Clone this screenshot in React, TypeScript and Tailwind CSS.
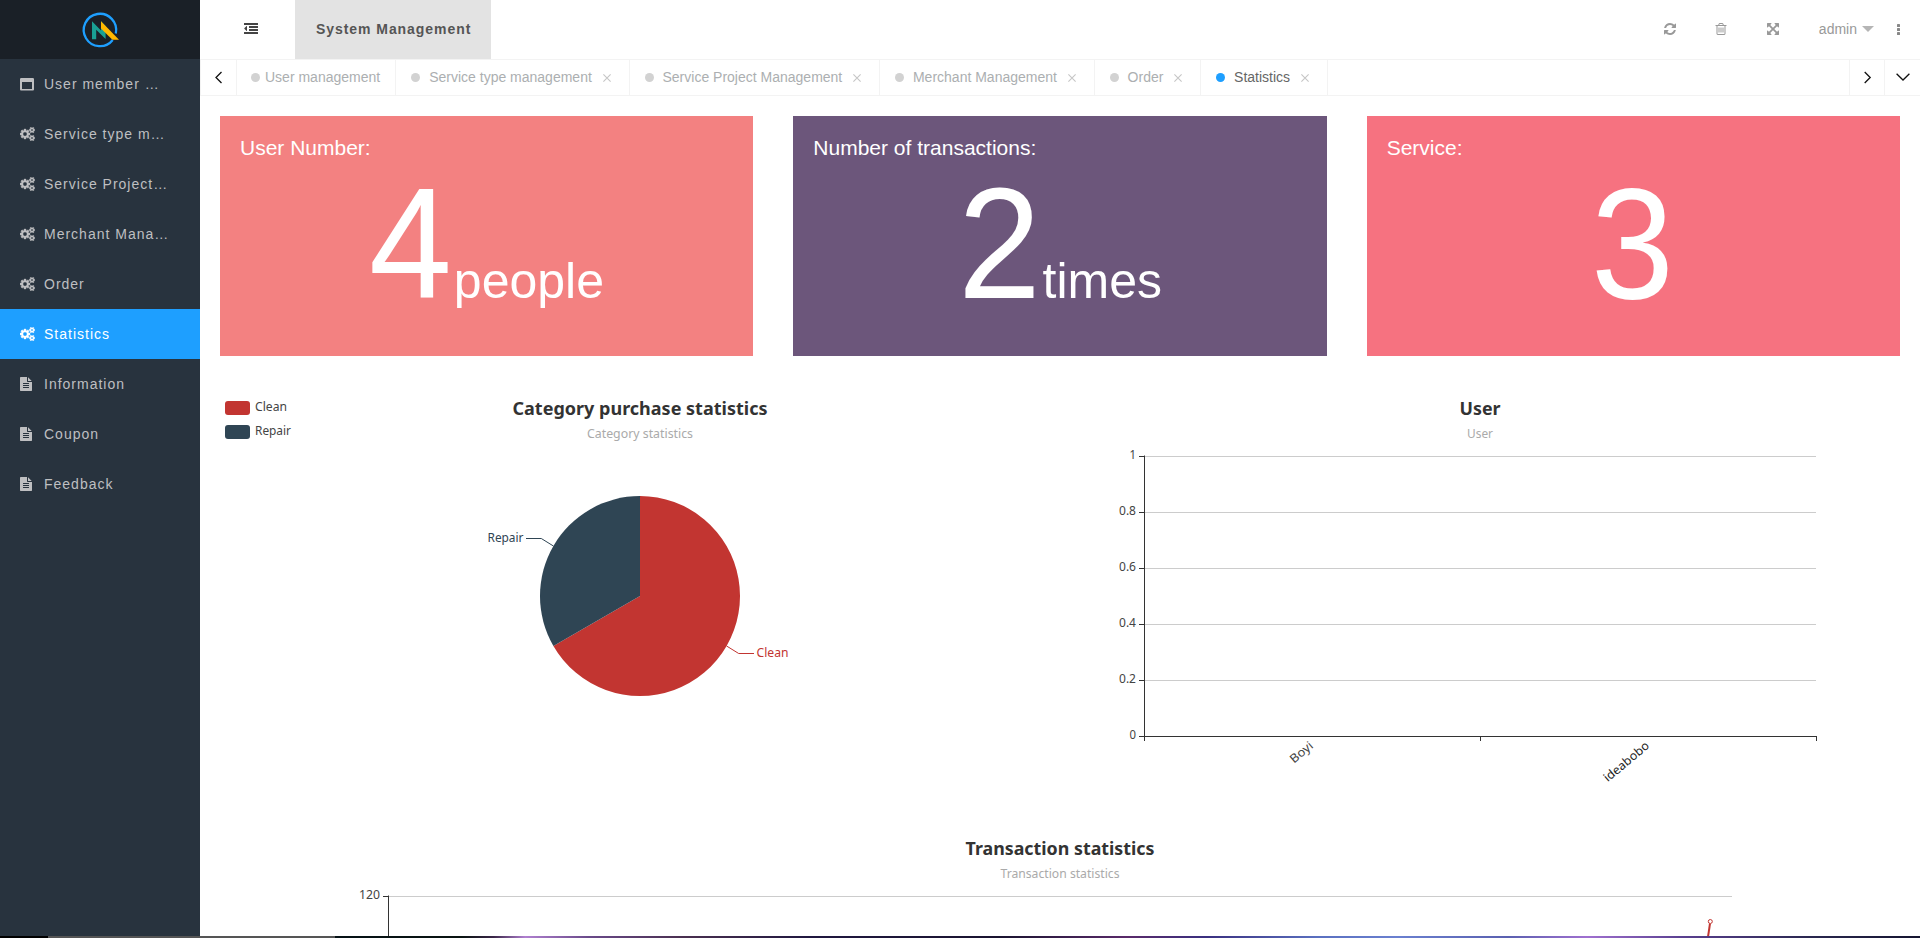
import React from "react";

const COGS =
  "M896 896q0-106-75-181t-181-75-181 75-75 181 75 181 181 75 181-75 75-181zm768 512q0-52-38-90t-90-38-90 38-38 90q0 53 37.5 90.5t90.5 37.5 90.5-37.5 37.5-90.5zm0-1024q0-52-38-90t-90-38-90 38-38 90q0 53 37.5 90.5t90.5 37.5 90.5-37.5 37.5-90.5zm-384 421v185q0 10-7 19.5t-16 10.5l-155 24q-11 35-32 76 34 48 90 115 7 11 7 20 0 12-7 19-23 30-82.5 89.5t-78.5 59.5q-11 0-21-7l-115-90q-37 19-77 31-11 108-23 155-7 24-30 24h-186q-11 0-20-7.5t-10-17.5l-23-153q-34-10-75-31l-118 89q-7 7-20 7-11 0-21-8-144-133-144-160 0-9 7-19 10-14 41-53t47-61q-23-44-35-82l-152-24q-10-1-17-9.5t-7-19.5v-185q0-10 7-19.5t16-10.5l155-24q11-35 32-76-34-48-90-115-7-11-7-20 0-12 7-20 22-30 82-89t79-59q11 0 21 7l115 90q34-18 77-32 11-108 23-154 7-24 30-24h186q11 0 20 7.5t10 17.5l23 153q34 10 75 31l118-89q8-7 20-7 11 0 21 8 144 133 144 160 0 8-7 19-12 16-42 54t-45 60q23 48 34 82l152 23q10 2 17 10.5t7 19.5zm640 533v140q0 16-149 31-12 27-30 52 51 113 51 138 0 4-4 7-122 71-124 71-8 0-46-47t-52-68q-20 2-30 2t-30-2q-14 21-52 68t-46 47q-2 0-124-71-4-3-4-7 0-25 51-138-18-25-30-52-149-15-149-31v-140q0-16 149-31 13-29 30-52-51-113-51-138 0-4 4-7 4-2 35-20t59-34 30-16q8 0 46 46.5t52 67.5q20-2 30-2t30 2q51-71 92-112l6-2q4 0 124 70 4 3 4 7 0 25-51 138 17 23 30 52 149 15 149 31zm0-1024v140q0 16-149 31-12 27-30 52 51 113 51 138 0 4-4 7-122 71-124 71-8 0-46-47t-52-68q-20 2-30 2t-30-2q-14 21-52 68t-46 47q-2 0-124-71-4-3-4-7 0-25 51-138-18-25-30-52-149-15-149-31v-140q0-16 149-31 13-29 30-52-51-113-51-138 0-4 4-7 4-2 35-20t59-34 30-16q8 0 46 46.5t52 67.5q20-2 30-2t30 2q51-71 92-112l6-2q4 0 124 70 4 3 4 7 0 25-51 138 17 23 30 52 149 15 149 31z";
const FILE =
  "M1596 476q14 14 28 36h-472v-472q22 14 36 28zm-476 164h544v1056q0 40-28 68t-68 28h-1344q-40 0-68-28t-28-68v-1600q0-40 28-68t68-28h800v544q0 40 28 68t68 28zm160 736v-64q0-14-9-23t-23-9h-704q-14 0-23 9t-9 23v64q0 14 9 23t23 9h704q14 0 23-9t9-23zm0-256v-64q0-14-9-23t-23-9h-704q-14 0-23 9t-9 23v64q0 14 9 23t23 9h704q14 0 23-9t9-23zm0-256v-64q0-14-9-23t-23-9h-704q-14 0-23 9t-9 23v64q0 14 9 23t23 9h704q14 0 23-9t9-23z";
const WINDOW =
  "M256 1536h1280v-896h-1280zM160 128h1472q66 0 113 47t47 113v1280q0 66-47 113t-113 47h-1472q-66 0-113-47t-47-113v-1280q0-66 47-113t113-47z";
const REFRESH =
  "M1639 1056q0 5-1 7-64 268-268 434.5t-478 166.5q-146 0-282.5-55t-243.5-157l-129 129q-19 19-45 19t-45-19-19-45v-448q0-26 19-45t45-19h448q26 0 45 19t19 45-19 45l-137 137q71 66 161 102t187 36q134 0 250-65t186-179q11-17 53-117 8-23 30-23h192q13 0 22.5 9.5t9.5 22.5zm25-800v448q0 26-19 45t-45 19h-448q-26 0-45-19t-19-45 19-45l138-138q-148-137-349-137-134 0-250 65t-186 179q-11 17-53 117-8 23-30 23h-199q-13 0-22.5-9.5t-9.5-22.5v-7q65-268 270-434.5t480-166.5q146 0 284 55.5t245 156.5l130-129q19-19 45-19t45 19 19 45z";
const TRASH =
  "M704 736v576q0 14-9 23t-23 9h-64q-14 0-23-9t-9-23v-576q0-14 9-23t23-9h64q14 0 23 9t9 23zm256 0v576q0 14-9 23t-23 9h-64q-14 0-23-9t-9-23v-576q0-14 9-23t23-9h64q14 0 23 9t9 23zm256 0v576q0 14-9 23t-23 9h-64q-14 0-23-9t-9-23v-576q0-14 9-23t23-9h64q14 0 23 9t9 23zm128 724v-948h-896v948q0 22 7 40.5t14.5 27 10.5 8.5h832q3 0 10.5-8.5t14.5-27 7-40.5zm-672-1076h448l-48-117q-7-9-17-11h-317q-10 2-17 11zm928 32v64q0 14-9 23t-23 9h-96v948q0 83-47 143.5t-113 60.5h-832q-66 0-113-58.5t-47-141.5v-952h-96q-14 0-23-9t-9-23v-64q0-14 9-23t23-9h309l70-167q15-37 54-63t79-26h320q40 0 79 26t54 63l70 167h309q14 0 23 9t9 23z";
const EXPAND =
  "M1411 541l-355 355 355 355 144-144q29-31 70-14 39 17 39 59v448q0 26-19 45t-45 19h-448q-42 0-59-40-17-39 14-69l144-144-355-355-355 355 144 144q31 30 14 69-17 40-59 40h-448q-26 0-45-19t-19-45v-448q0-42 40-59 39-17 69 14l144 144 355-355-355-355-144 144q-19 19-45 19-12 0-24-5-40-17-40-59v-448q0-26 19-45t45-19h448q42 0 59 40 17 39-14 69l-144 144 355 355 355-355-144-144q-31-30-14-69 17-40 59-40h448q26 0 45 19t19 45v448q0 42-39 59-13 5-25 5-26 0-45-19z";
const OUTDENT =
  "M384 544v576q0 13-9.5 22.5t-22.5 9.5q-14 0-23-9l-288-288q-9-9-9-23t9-23l288-288q9-9 23-9 13 0 22.5 9.5t9.5 22.5zM32 1280h1728q32 0 32 32v192q0 32-32 32h-1728q-32 0-32-32v-192q0-32 32-32zM672 896h1088q32 0 32 32v192q0 32-32 32h-1088q-32 0-32-32v-192q0-32 32-32zM672 512h1088q32 0 32 32v192q0 32-32 32h-1088q-32 0-32-32v-192q0-32 32-32zM32 128h1728q32 0 32 32v192q0 32-32 32h-1728q-32 0-32-32v-192q0-32 32-32z";

function Glyph({ d, box = "0 0 1792 1792", className = "h-3.5 w-3.5" }: { d: string; box?: string; className?: string }) {
  return (
    <svg viewBox={box} className={className} fill="currentColor" fillRule={d === WINDOW ? "evenodd" : "nonzero"}>
      <path d={d} />
    </svg>
  );
}

type Kind = "window" | "cogs" | "file";

const MENU: { label: string; kind: Kind; active?: boolean }[] = [
  { label: "User member …", kind: "window" },
  { label: "Service type m…", kind: "cogs" },
  { label: "Service Project…", kind: "cogs" },
  { label: "Merchant Mana…", kind: "cogs" },
  { label: "Order", kind: "cogs" },
  { label: "Statistics", kind: "cogs", active: true },
  { label: "Information", kind: "file" },
  { label: "Coupon", kind: "file" },
  { label: "Feedback", kind: "file" },
];

function MenuIcon({ kind }: { kind: Kind }) {
  if (kind === "window") return <Glyph d={WINDOW} />;
  if (kind === "cogs") return <Glyph d={COGS} box="0 0 1920 1792" className="h-3.5 w-[15px] stroke-current stroke-[50]" />;
  return <Glyph d={FILE} box="128 0 1536 1792" className="h-3.5 w-3" />;
}

function Sidebar() {
  return (
    <aside className="flex w-[200px] shrink-0 flex-col bg-[#28333e]">
      <div className="flex h-[59px] justify-center bg-[#1a2027]">
        <svg viewBox="80 10 40 40" className="mt-2.5 h-10 w-10">
          <path d="M112.7 40A16.2 16.2 0 1 1 115.8 33.4" fill="none" stroke="#1e9fff" strokeWidth="2.3" />
          <path d="M92 21.2L101 30.6V21.2L105.6 26V39L96.2 29.8V39.2H92z" fill="#1aa094" />
          <path d="M101 21.2L119 39.8H112.4L101 28.4z" fill="#ffb800" />
        </svg>
      </div>
      <nav className="flex flex-col">
        {MENU.map((m) => (
          <div
            key={m.label}
            className={
              m.active
                ? "flex h-[50px] items-center bg-[#1e9fff] pl-5 text-sm tracking-[1px] text-white"
                : "flex h-[50px] items-center pl-5 text-sm tracking-[1px] text-[#bebfc1]"
            }
          >
            <span className="w-6 shrink-0">
              <MenuIcon kind={m.kind} />
            </span>
            <span className="whitespace-nowrap">{m.label}</span>
          </div>
        ))}
      </nav>
    </aside>
  );
}

function Header() {
  return (
    <header className="flex h-[59px] shrink-0 items-center text-[#999]">
      <span className="ml-11 w-[51px] pb-px text-[#444]">
        <Glyph d={OUTDENT} />
      </span>
      <div className="flex h-full w-[196px] items-center bg-[#e3e3e3] pb-px pl-[21px] text-sm font-bold tracking-[0.94px] whitespace-nowrap text-[#555]">
        System Management
      </div>
      <div className="ml-auto flex items-center pb-px">
        <Glyph d={REFRESH} />
        <Glyph d={TRASH} className="ml-[37px] h-3.5 w-3.5" />
        <Glyph d={EXPAND} className="ml-[38px] h-3.5 w-3.5" />
        <span className="ml-[39px] text-sm">admin</span>
        <svg viewBox="0 0 12 6" className="ml-[5px] h-1.5 w-3" fill="#b5b5b5">
          <path d="M0 0h12L6 6z" />
        </svg>
        <svg viewBox="0 0 3 11" className="mr-5 ml-[23px] h-[11px] w-[3px]" fill="#888">
          <rect width="3" height="3" rx=".6" />
          <rect y="4" width="3" height="3" rx=".6" />
          <rect y="8" width="3" height="3" rx=".6" />
        </svg>
      </div>
    </header>
  );
}

const TABS = [
  "User management",
  "Service type management",
  "Service Project Management",
  "Merchant Management",
  "Order",
  "Statistics",
];

function Tab({ label, first, active }: { label: string; first: boolean; active: boolean }) {
  return (
    <div
      className={
        first
          ? "flex items-center border-r border-[#f3f3f3] pr-[15px] pb-px pl-3.5"
          : "flex items-center border-r border-[#f3f3f3] pr-[17.7px] pb-px pl-[15px]"
      }
    >
      <span className={active ? "h-[9px] w-[9px] rounded-full bg-[#1e9fff]" : "h-[9px] w-[9px] rounded-full bg-[#d2d2d2]"} />
      <span
        className={
          active
            ? "ml-[9px] pb-px text-sm whitespace-nowrap text-[#666]"
            : first
              ? "ml-[5px] pb-px text-sm whitespace-nowrap text-[#acafb1]"
              : "ml-[9px] pb-px text-sm whitespace-nowrap text-[#acafb1]"
        }
      >
        {label}
      </span>
      {!first && (
        <svg viewBox="0 0 8 8" className="mt-0.5 ml-[11px] h-2 w-2" stroke="#c6c6c6" strokeWidth="1.1">
          <path d="M.4.4l7.2 7.2M7.6.4L.4 7.6" />
        </svg>
      )}
    </div>
  );
}

function TabBar() {
  return (
    <div className="flex h-[37px] shrink-0 border-y border-[#f3f3f3]">
      <div className="flex w-[37px] items-center border-x border-[#f3f3f3] pb-px pl-3.5">
        <svg viewBox="0 0 8 13" className="h-[13px] w-2" fill="none" stroke="#111" strokeWidth="1.3">
          <path d="M6.5 1L1 6.5 6.5 12" />
        </svg>
      </div>
      {TABS.map((t, i) => (
        <Tab key={t} label={t} first={i === 0} active={i === 5} />
      ))}
      <div className="ml-auto flex w-[35px] items-center border-l border-[#f3f3f3] pb-px pl-3.5">
        <svg viewBox="0 0 8 13" className="h-[13px] w-2" fill="none" stroke="#111" strokeWidth="1.3">
          <path d="M.7 1l5.5 5.5L.7 12" />
        </svg>
      </div>
      <div className="flex w-9 items-center border-l border-[#f3f3f3] pb-0.5 pl-[11px]">
        <svg viewBox="0 0 14 8" className="h-2 w-3.5" fill="none" stroke="#111" strokeWidth="1.3">
          <path d="M.6.7L7 7 13.4.7" />
        </svg>
      </div>
    </div>
  );
}

const CARDS = [
  { title: "User Number:", value: "4", unit: "people", box: "h-60 bg-[#f38181] px-5 pt-5 text-white" },
  { title: "Number of transactions:", value: "2", unit: "times", box: "h-60 bg-[#6c567b] px-5 pt-5 text-white" },
  { title: "Service:", value: "3", unit: "", box: "h-60 bg-[#f67280] px-5 pt-5 text-white" },
];

function Cards() {
  return (
    <div className="grid h-60 shrink-0 grid-cols-3 gap-10">
      {CARDS.map((c) => (
        <div key={c.title} className={c.box}>
          <div className="text-[21px] leading-6 whitespace-nowrap">{c.title}</div>
          <div className="mt-[5px] text-center text-[152px] leading-[160px] whitespace-nowrap">
            <span className="inline-block origin-[0_133px] scale-x-[0.98] scale-y-[1.04]">{c.value}</span>
            <span className="text-[50px]">{c.unit}</span>
          </div>
        </div>
      ))}
    </div>
  );
}

const CHART_FONT = "font-['Noto_Sans',sans-serif]";

function Label({
  x,
  y,
  w,
  children,
  anchor = "start",
  fill = "#444",
  size = 12,
  bold = false,
  transform,
}: {
  x: number;
  y: number;
  w: number;
  children: string;
  anchor?: "start" | "middle" | "end";
  fill?: string;
  size?: number;
  bold?: boolean;
  transform?: string;
}) {
  return (
    <text
      x={x}
      y={y}
      textLength={w}
      lengthAdjust="spacingAndGlyphs"
      textAnchor={anchor}
      fill={fill}
      fontSize={size}
      fontWeight={bold ? 700 : 400}
      transform={transform}
    >
      {children}
    </text>
  );
}

function PieChart() {
  return (
    <svg viewBox="220 376 840 440" className={`h-[440px] w-[840px] ${CHART_FONT}`}>
      <rect x="225" y="401" width="25" height="14" rx="3" fill="#c23531" />
      <rect x="225" y="425" width="25" height="14" rx="3" fill="#2f4554" />
      <Label x={255} y={411} w={32}>Clean</Label>
      <Label x={255} y={435} w={36}>Repair</Label>
      <Label x={640} y={415} w={255} anchor="middle" fill="#333" size={18} bold>Category purchase statistics</Label>
      <Label x={640} y={438} w={106} anchor="middle" fill="#aaa">Category statistics</Label>
      <path d="M640 596V496A100 100 0 1 1 553.4 646z" fill="#c23531" />
      <path d="M640 596L553.4 646A100 100 0 0 1 640 496z" fill="#2f4554" />
      <path d="M553.4 546L541.3 538.5H526" fill="none" stroke="#2f4554" />
      <path d="M726.6 646L738.7 653.5H754" fill="none" stroke="#c23531" />
      <Label x={523.5} y={542} w={36} anchor="end" fill="#2f4554">Repair</Label>
      <Label x={756.5} y={657} w={32} fill="#c23531">Clean</Label>
    </svg>
  );
}

const Y_TICKS = [
  { label: "1", y: 456.5, w: 6.5 },
  { label: "0.8", y: 512.5, w: 17 },
  { label: "0.6", y: 568.5, w: 17 },
  { label: "0.4", y: 624.5, w: 17 },
  { label: "0.2", y: 680.5, w: 17 },
  { label: "0", y: 736.5, w: 6.5 },
];

function UserChart() {
  return (
    <svg viewBox="1060 376 840 440" className={`h-[440px] w-[840px] ${CHART_FONT}`}>
      <Label x={1480} y={415} w={41} anchor="middle" fill="#333" size={18} bold>User</Label>
      <Label x={1480} y={438} w={26} anchor="middle" fill="#aaa">User</Label>
      {Y_TICKS.map((t) => (
        <g key={t.label}>
          {t.label !== "0" && <path d={`M1144 ${t.y}H1816`} stroke="#ccc" />}
          <path d={`M1139 ${t.y}H1144`} stroke="#333" />
          <Label x={1136} y={t.y + 2.5} w={t.w} anchor="end">{t.label}</Label>
        </g>
      ))}
      <path d="M1144.5 455.5V741M1144 736.5H1817M1480.5 736V741M1816.5 736V741" fill="none" stroke="#333" />
      <Label x={1314} y={747} w={26} anchor="end" transform="rotate(-40 1314 747)">Boyi</Label>
      <Label x={1650} y={747} w={55} anchor="end" fill="#222" transform="rotate(-40 1650 747)">ideabobo</Label>
    </svg>
  );
}

function TransactionChart() {
  return (
    <svg viewBox="220 816 1680 120" className={`h-[120px] w-[1680px] ${CHART_FONT}`}>
      <Label x={1060} y={855} w={189} anchor="middle" fill="#333" size={18} bold>Transaction statistics</Label>
      <Label x={1060} y={878} w={119} anchor="middle" fill="#aaa">Transaction statistics</Label>
      <path d="M388 896.5H1732" stroke="#ccc" />
      <path d="M383 896.5H388M388.5 895.5V936" stroke="#333" />
      <Label x={380} y={899} w={21} anchor="end">120</Label>
      <path d="M1710 923.5L1708 937" stroke="#c23531" strokeWidth="2" />
      <circle cx="1710.3" cy="921.5" r="2" fill="#fff" stroke="#c23531" />
    </svg>
  );
}

export default function App() {
  return (
    <div className="flex h-[938px] w-[1920px] flex-col overflow-hidden bg-white font-['Liberation_Sans',Arial,sans-serif]">
      <div className="flex h-[936px] shrink-0">
        <Sidebar />
        <main className="flex w-[1720px] flex-col">
          <Header />
          <TabBar />
          <div className="flex flex-col px-5 pt-5">
            <Cards />
            <div className="mt-5 flex">
              <PieChart />
              <UserChart />
            </div>
            <TransactionChart />
          </div>
        </main>
      </div>
      <div className="flex h-0.5 shrink-0">
        <div className="w-12 bg-black" />
        <div className="w-[287px] bg-[#555]" />
        <div className="grow bg-[linear-gradient(90deg,#061216_0%,#0a1412_8%,#3a2648_10%,#b080d0_12%,#6a4a8a_16%,#4a3050_22%,#201840_30%,#1a1430_42%,#5a2a6a_50%,#3a3080_55%,#5a70c0_62%,#6a80d0_67%,#5a60b0_74%,#a070d0_79%,#5a4090_85%,#2a2850_93%,#151530_100%)]" />
      </div>
    </div>
  );
}
